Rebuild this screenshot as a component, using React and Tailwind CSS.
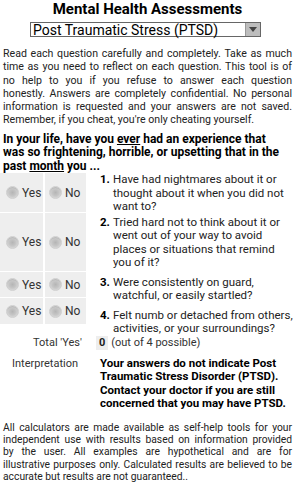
import React from "react";

function Radio({ label }) {
  return (
    <div className="flex items-center gap-[3px]">
      <span className="w-[13px] h-[13px] rounded-full border border-[#cfcfcf] bg-[radial-gradient(circle_at_50%_50%,#b5b5b5_0%,#c6c6c6_45%,#e8e8e8_100%)] shadow-[inset_0_1px_1px_rgba(0,0,0,0.12)]" />
      <span className="text-[12px] leading-[14px] text-[#333]">{label}</span>
    </div>
  );
}

function Cells({ h }) {
  return (
    <div className="flex gap-[2px]" style={{ height: h }}>
      <div className="w-[43px] bg-[#eeeeee] flex items-center pl-[6px]">
        <Radio label="Yes" />
      </div>
      <div className="w-[41px] bg-[#eeeeee] flex items-center pl-[4px]">
        <Radio label="No" />
      </div>
    </div>
  );
}

function Q({ n, children, mt }) {
  return (
    <div className="flex" style={{ marginTop: mt }}>
      <span className="w-[13px] font-bold text-[11.5px] leading-[13.5px] text-black">{n}.</span>
      <span className="flex-1 text-[11.5px] leading-[13.5px] text-[#222]">{children}</span>
    </div>
  );
}

function JLines({ lines, className }) {
  return (
    <div className={className}>
      {lines.map((l, i) => (
        <div
          key={i}
          className={i < lines.length - 1 ? "text-justify [text-align-last:justify] whitespace-nowrap" : "whitespace-nowrap"}
        >
          {l}
        </div>
      ))}
    </div>
  );
}

export default function App() {
  return (
    <div className="w-[295px] h-[500px] overflow-hidden bg-white text-[#222] font-['Roboto',sans-serif]">
      <h1 className="text-center font-bold text-[15px] leading-[18px] text-black">
        Mental Health Assessments
      </h1>
      <div className="flex mt-[4px] pl-[30px]">
        <div className="w-[231px] h-[15px] border border-[#666] bg-white flex items-center">
          <span className="flex-1 pl-[2px] text-[14px] leading-[14px] text-black">Post Traumatic Stress (PTSD)</span>
          <div className="w-[15px] h-[13px] bg-[#bdbdbd] border-l border-[#999] flex items-center justify-center">
            <svg width="8" height="5" viewBox="0 0 8 5">
              <path d="M0 0 L8 0 L4 5 Z" fill="#444" />
            </svg>
          </div>
        </div>
      </div>
      <JLines
        className="px-[3px] mt-[10px] text-[10.6px] leading-[13.3px] text-[#222]"
        lines={[
          "Read each question carefully and completely. Take as much",
          "time as you need to reflect on each question. This tool is of",
          "no help to you if you refuse to answer each question",
          "honestly. Answers are completely confidential. No personal",
          "information is requested and your answers are not saved.",
          "Remember, if you cheat, you're only cheating yourself.",
        ]}
      />
      <div className="px-[3px] mt-[6px] text-[12px] leading-[13.5px] font-bold text-black">
        <div>In your life, have you <span className="underline">ever</span> had an experience that</div>
        <div>was so frightening, horrible, or upsetting that in the</div>
        <div>past <span className="underline">month</span> you ...</div>
      </div>
      <div className="flex">
        <div className="w-[86px] flex flex-col gap-[1px]">
          <Cells h={39} />
          <Cells h={58} />
          <Cells h={25} />
          <Cells h={26} />
        </div>
        <div className="ml-[14px] flex-1">
          <Q n="1" mt={0}>Have had nightmares about it or thought about it when you did not want to?</Q>
          <Q n="2" mt={2}>Tried hard not to think about it or went out of your way to avoid places or situations that remind you of it?</Q>
          <Q n="3" mt={6}>Were consistently on guard, watchful, or easily startled?</Q>
          <Q n="4" mt={6}>Felt numb or detached from others, activities, or your surroundings?</Q>
        </div>
      </div>
      <div className="flex items-center h-[14px]">
        <div className="ml-[33px] text-[11px] leading-[14px] text-[#333]">Total 'Yes'</div>
        <div className="ml-[14px] bg-[#eeeeee] px-[3px] text-[11px] leading-[14px] font-bold">0</div>
        <div className="ml-[3px] text-[11px] leading-[14px] text-[#333]">(out of 4 possible)</div>
      </div>
      <div className="flex mt-[7px]">
        <div className="w-[88px] pl-[12px] text-[11px] leading-[13.5px] text-[#333]">Interpretation</div>
        <div className="ml-[12px] flex-1 pr-[3px] text-[11.5px] leading-[13.5px] font-bold text-black">
          Your answers do not indicate Post Traumatic Stress Disorder (PTSD). Contact your doctor if you are still concerned that you may have PTSD.
        </div>
      </div>
      <JLines
        className="px-[3px] mt-[11px] text-[10.3px] leading-[12.3px] text-[#222]"
        lines={[
          "All calculators are made available as self-help tools for your",
          "independent use with results based on information provided",
          "by the user. All examples are hypothetical and are for",
          "illustrative purposes only. Calculated results are believed to be",
          "accurate but results are not guaranteed..",
        ]}
      />
    </div>
  );
}
